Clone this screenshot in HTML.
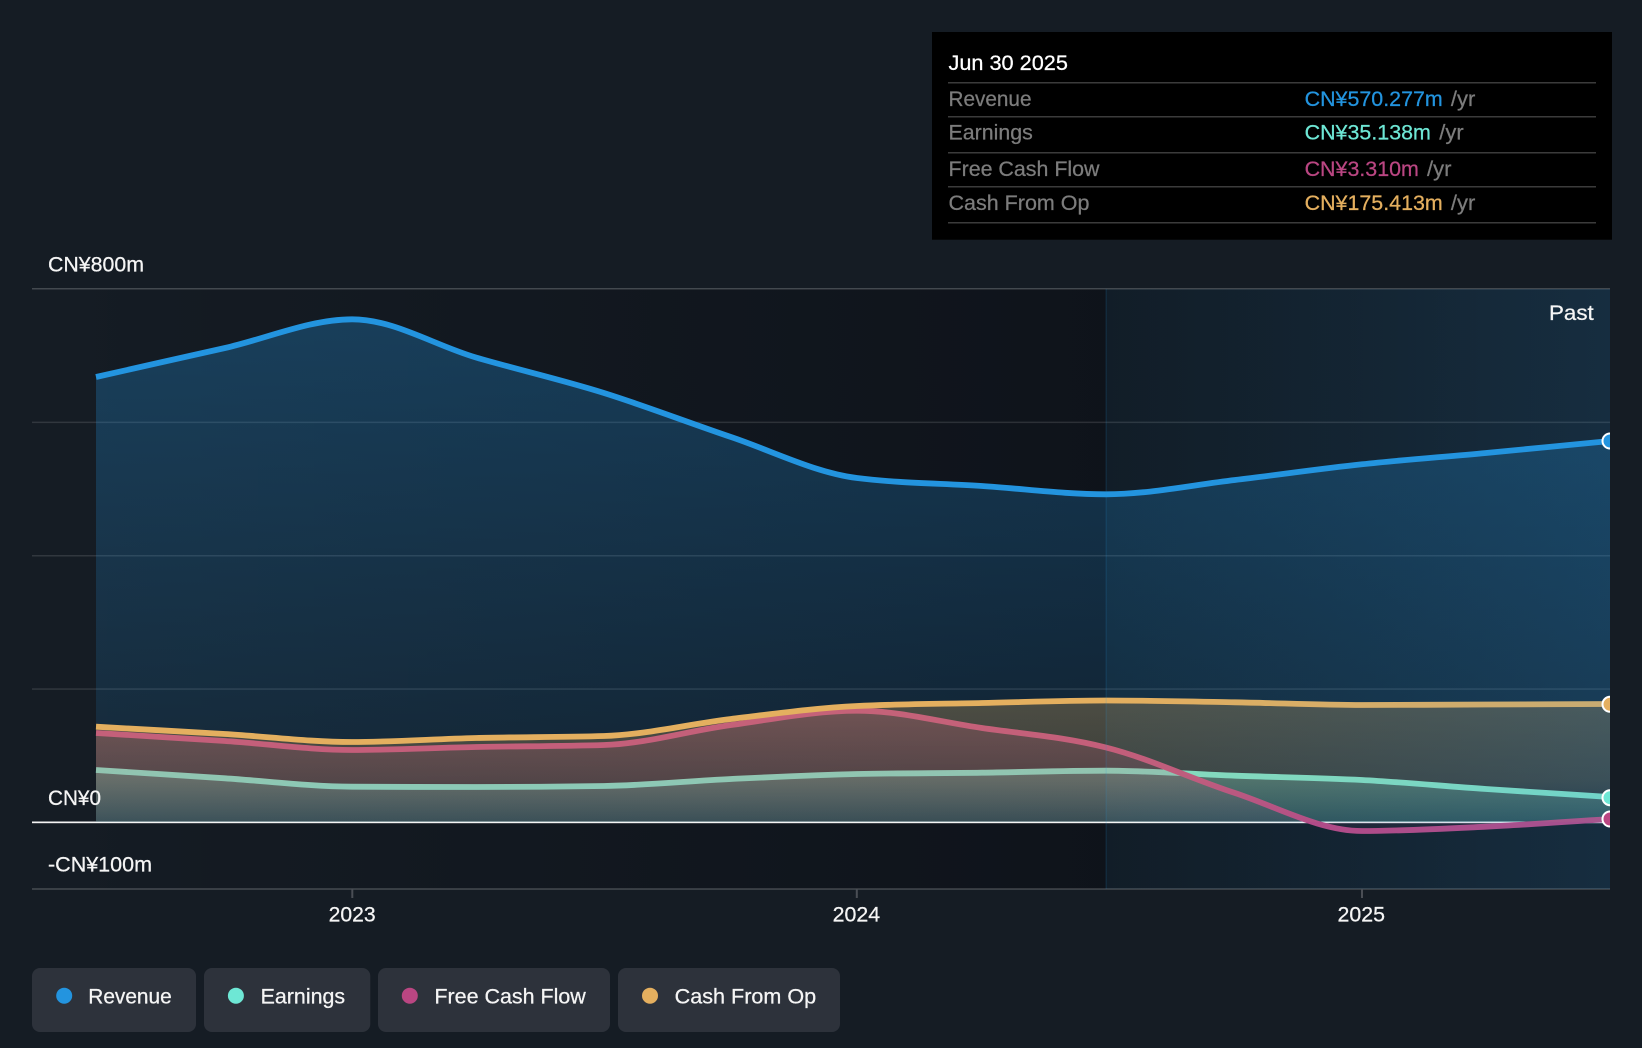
<!DOCTYPE html>
<html>
<head>
<meta charset="utf-8">
<style>
html,body{margin:0;padding:0;background:#151c24;}
svg{display:block;}
text{font-family:"Liberation Sans","Noto Sans CJK SC",sans-serif;font-size:21px;fill:currentColor;stroke:currentColor;stroke-width:.25px;}
</style>
</head>
<body>
<svg width="1642" height="1048" viewBox="0 0 1642 1048" xmlns="http://www.w3.org/2000/svg">
<defs>
<linearGradient id="dark" gradientUnits="userSpaceOnUse" x1="32" y1="0" x2="1106" y2="0">
<stop offset="0" stop-color="#020208" stop-opacity="0"/><stop offset="1" stop-color="#020208" stop-opacity=".34"/>
</linearGradient>
<linearGradient id="pastbg" gradientUnits="userSpaceOnUse" x1="1106" y1="0" x2="1610" y2="0">
<stop offset="0" stop-color="#082030" stop-opacity=".3"/><stop offset="1" stop-color="#081420" stop-opacity=".1"/>
</linearGradient>
<linearGradient id="past" gradientUnits="userSpaceOnUse" x1="1106" y1="0" x2="1610" y2="0">
<stop offset="0" stop-color="#2394df" stop-opacity="0"/><stop offset="1" stop-color="#2394df" stop-opacity=".15"/>
</linearGradient>
<linearGradient id="gb" gradientUnits="userSpaceOnUse" x1="0" y1="319" x2="0" y2="822">
<stop offset="0" stop-color="#2394df" stop-opacity=".3"/><stop offset="1" stop-color="#2394df" stop-opacity=".1"/>
</linearGradient>
<linearGradient id="gt" gradientUnits="userSpaceOnUse" x1="0" y1="770" x2="0" y2="822">
<stop offset="0" stop-color="#6ee7d5" stop-opacity=".32"/><stop offset="1" stop-color="#6ee7d5" stop-opacity=".2"/>
</linearGradient>
<linearGradient id="gp" gradientUnits="userSpaceOnUse" x1="0" y1="710" x2="0" y2="822">
<stop offset="0" stop-color="#ba4682" stop-opacity=".3"/><stop offset="1" stop-color="#ba4682" stop-opacity=".08"/>
</linearGradient>
<linearGradient id="go" gradientUnits="userSpaceOnUse" x1="0" y1="700" x2="0" y2="822">
<stop offset="0" stop-color="#e4af5f" stop-opacity=".28"/><stop offset=".65" stop-color="#e4af5f" stop-opacity=".2"/><stop offset="1" stop-color="#e4af5f" stop-opacity=".05"/>
</linearGradient>
<clipPath id="c"><rect x="32" y="280" width="1578" height="620"/></clipPath>
</defs>

<rect width="1642" height="1048" fill="#151c24"/>

<!-- background panel -->
<rect x="32" y="289" width="1074" height="600" fill="url(#dark)"/>
<rect x="1106" y="289" width="504" height="600" fill="url(#pastbg)"/>

<!-- grid -->
<rect x="32" y="288" width="1578" height="1.5" fill="#fff" fill-opacity=".2"/>
<rect x="32" y="421.6" width="1578" height="1.5" fill="#fff" fill-opacity=".12"/>
<rect x="32" y="555" width="1578" height="1.5" fill="#fff" fill-opacity=".12"/>
<rect x="32" y="688.3" width="1578" height="1.5" fill="#fff" fill-opacity=".12"/>
<rect x="32" y="888.2" width="1578" height="1.6" fill="#fff" fill-opacity=".2"/>
<rect x="351.3" y="889" width="2" height="9" fill="#4a4e55"/>
<rect x="855.8" y="889" width="2" height="9" fill="#4a4e55"/>
<rect x="1361" y="889" width="2" height="9" fill="#4a4e55"/>
<rect x="32" y="821.5" width="1578" height="1.7" fill="#f4f4f4"/>

<g clip-path="url(#c)">
<!-- revenue -->
<path fill="url(#gb)" d="M96 377 C138 367.3,183 357.6,225 348 C267 338.4,310 319.3,352 319.3 C394 319.3,434 345.2,476 357.5 C518 369.8,562 379.8,604 393 C646 406.2,689 422.8,731 437 C773 451.2,815 472.7,857 478 C899 483.3,940 483.3,982 486 C1024 488.7,1064 494.3,1106 494.3 C1149 494.3,1192 485,1235 480 C1277 475,1320 468.8,1362 464.3 C1403 459.8,1445 456.9,1486 453 C1527 449.1,1569 445,1610 441 L1610 822 L96 822 Z"/>
<path fill="none" stroke="#2394df" stroke-width="5.8" d="M96 377 C138 367.3,183 357.6,225 348 C267 338.4,310 319.3,352 319.3 C394 319.3,434 345.2,476 357.5 C518 369.8,562 379.8,604 393 C646 406.2,689 422.8,731 437 C773 451.2,815 472.7,857 478 C899 483.3,940 483.3,982 486 C1024 488.7,1064 494.3,1106 494.3 C1149 494.3,1192 485,1235 480 C1277 475,1320 468.8,1362 464.3 C1403 459.8,1445 456.9,1486 453 C1527 449.1,1569 445,1610 441"/>
<!-- earnings -->
<path fill="url(#gt)" d="M96 770 C138 772.8,183 775.5,225 778.3 C267 781.1,310 786.5,352 786.7 C394 786.9,434 787,476 787 C518 787,562 786.7,604 786 C646 785.3,689 781,731 779 C773 777,815 774.9,857 774 C899 773.1,940 773.3,982 772.7 C1024 772.1,1064 770.7,1106 770.7 C1149 770.7,1192 774.2,1235 775.7 C1277 777.2,1320 777.8,1362 780 C1403 782.2,1445 786.2,1486 789 C1527 791.8,1569 794.3,1610 797 L1610 822 L96 822 Z"/>
<path fill="none" stroke="#6ee7d5" stroke-width="5.8" d="M96 770 C138 772.8,183 775.5,225 778.3 C267 781.1,310 786.5,352 786.7 C394 786.9,434 787,476 787 C518 787,562 786.7,604 786 C646 785.3,689 781,731 779 C773 777,815 774.9,857 774 C899 773.1,940 773.3,982 772.7 C1024 772.1,1064 770.7,1106 770.7 C1149 770.7,1192 774.2,1235 775.7 C1277 777.2,1320 777.8,1362 780 C1403 782.2,1445 786.2,1486 789 C1527 791.8,1569 794.3,1610 797"/>
<!-- fcf -->
<path fill="url(#gp)" d="M96 733 C138 735.7,183 738.2,225 741 C267 743.8,310 750,352 750 C394 750,434 747.8,476 747 C518 746.2,562 746.3,604 745 C646 743.7,689 730.7,731 725 C773 719.3,815 710.7,857 710.7 C899 710.7,940 721.9,982 728 C1024 734.1,1064 736.7,1106 747.5 C1149 758.3,1192 779.1,1235 793 C1277 806.9,1320 831,1362 831 C1403 831,1445 828.7,1486 826.7 C1527 824.7,1569 821.6,1610 819 L1610 822 L96 822 Z"/>
<path fill="none" stroke="#ba4682" stroke-width="5.8" d="M96 733 C138 735.7,183 738.2,225 741 C267 743.8,310 750,352 750 C394 750,434 747.8,476 747 C518 746.2,562 746.3,604 745 C646 743.7,689 730.7,731 725 C773 719.3,815 710.7,857 710.7 C899 710.7,940 721.9,982 728 C1024 734.1,1064 736.7,1106 747.5 C1149 758.3,1192 779.1,1235 793 C1277 806.9,1320 831,1362 831 C1403 831,1445 828.7,1486 826.7 C1527 824.7,1569 821.6,1610 819"/>
<!-- cash from op -->
<path fill="url(#go)" d="M96 726.7 C138 729.1,183 731.5,225 734 C267 736.5,310 742,352 742 C394 742,434 739,476 738 C518 737,562 737.3,604 736 C646 734.7,689 724,731 719 C773 714,815 708,857 706 C899 704,940 703.9,982 703 C1024 702.1,1064 700.5,1106 700.5 C1149 700.5,1192 701.5,1235 702.3 C1277 703,1320 705,1362 705 C1403 705,1445 704.7,1486 704.5 C1527 704.3,1569 704.2,1610 704 L1610 822 L96 822 Z"/>
<path fill="none" stroke="#e4af5f" stroke-width="5.8" d="M96 726.7 C138 729.1,183 731.5,225 734 C267 736.5,310 742,352 742 C394 742,434 739,476 738 C518 737,562 737.3,604 736 C646 734.7,689 724,731 719 C773 714,815 708,857 706 C899 704,940 703.9,982 703 C1024 702.1,1064 700.5,1106 700.5 C1149 700.5,1192 701.5,1235 702.3 C1277 703,1320 705,1362 705 C1403 705,1445 704.7,1486 704.5 C1527 704.3,1569 704.2,1610 704"/>

<!-- past overlay -->
<rect x="1106" y="289" width="504" height="600" fill="url(#past)"/>
<rect x="1105.5" y="289" width="1.3" height="600" fill="#2394df" fill-opacity=".15"/>

<!-- end dots -->
<circle cx="1610" cy="441" r="7.5" fill="#2394df" stroke="#fff" stroke-width="2"/>
<circle cx="1610" cy="704.3" r="7.5" fill="#e4af5f" stroke="#fff" stroke-width="2"/>
<circle cx="1610" cy="797.7" r="7.5" fill="#6ee7d5" stroke="#fff" stroke-width="2"/>
<circle cx="1610" cy="819" r="7.5" fill="#ba4682" stroke="#fff" stroke-width="2"/>
</g>

<!-- axis labels -->
<text x="48" y="271.7" color="#f5f5f5" textLength="96" lengthAdjust="spacingAndGlyphs">CN¥800m</text>
<text x="48" y="805" color="#f5f5f5" textLength="53" lengthAdjust="spacingAndGlyphs">CN¥0</text>
<text x="48" y="871.7" color="#f5f5f5" textLength="104" lengthAdjust="spacingAndGlyphs">-CN¥100m</text>
<text x="328.7" y="921.7" color="#f5f5f5" textLength="47" lengthAdjust="spacingAndGlyphs">2023</text>
<text x="832.6" y="921.7" color="#f5f5f5" textLength="47.5" lengthAdjust="spacingAndGlyphs">2024</text>
<text x="1337.5" y="921.7" color="#f5f5f5" textLength="47.5" lengthAdjust="spacingAndGlyphs">2025</text>
<text x="1549" y="320" color="#f5f5f5" textLength="44.7" lengthAdjust="spacingAndGlyphs">Past</text>

<!-- tooltip -->
<rect x="932" y="32" width="680" height="207.7" fill="#000"/>
<text x="948.5" y="70" color="#fff" textLength="119.4" lengthAdjust="spacingAndGlyphs">Jun 30 2025</text>
<rect x="948" y="82" width="648" height="1.5" fill="#3b3b3b"/>
<text x="948.5" y="106" color="#7c7c7c" textLength="83" lengthAdjust="spacingAndGlyphs">Revenue</text>
<text x="1304.6" y="106" color="#2394df" textLength="138.2" lengthAdjust="spacingAndGlyphs">CN¥570.277m</text>
<text x="1450.9" y="106" color="#7c7c7c" textLength="24.4" lengthAdjust="spacingAndGlyphs">/yr</text>
<rect x="948" y="116" width="648" height="1.5" fill="#3b3b3b"/>
<text x="948.5" y="139.3" color="#7c7c7c" textLength="84.3" lengthAdjust="spacingAndGlyphs">Earnings</text>
<text x="1304.6" y="139.3" color="#6ee7d5" textLength="126.3" lengthAdjust="spacingAndGlyphs">CN¥35.138m</text>
<text x="1439.3" y="139.3" color="#7c7c7c" textLength="24.4" lengthAdjust="spacingAndGlyphs">/yr</text>
<rect x="948" y="152" width="648" height="1.5" fill="#3b3b3b"/>
<text x="948.5" y="176" color="#7c7c7c" textLength="151" lengthAdjust="spacingAndGlyphs">Free Cash Flow</text>
<text x="1304.6" y="176" color="#ba4682" textLength="114.3" lengthAdjust="spacingAndGlyphs">CN¥3.310m</text>
<text x="1427" y="176" color="#7c7c7c" textLength="24.4" lengthAdjust="spacingAndGlyphs">/yr</text>
<rect x="948" y="186" width="648" height="1.5" fill="#3b3b3b"/>
<text x="948.5" y="210" color="#7c7c7c" textLength="141" lengthAdjust="spacingAndGlyphs">Cash From Op</text>
<text x="1304.6" y="210" color="#e4af5f" textLength="138.2" lengthAdjust="spacingAndGlyphs">CN¥175.413m</text>
<text x="1450.9" y="210" color="#7c7c7c" textLength="24.4" lengthAdjust="spacingAndGlyphs">/yr</text>
<rect x="948" y="222" width="648" height="1.5" fill="#3b3b3b"/>

<!-- legend -->
<rect x="32" y="968" width="164" height="64" rx="8" fill="#2d323b"/>
<circle cx="64.2" cy="995.7" r="8" fill="#2394df"/>
<text x="88.3" y="1003.3" color="#f5f5f5" textLength="83.4" lengthAdjust="spacingAndGlyphs">Revenue</text>
<rect x="204" y="968" width="166.3" height="64" rx="8" fill="#2d323b"/>
<circle cx="235.9" cy="995.7" r="8" fill="#6ee7d5"/>
<text x="260.6" y="1003.3" color="#f5f5f5" textLength="84.5" lengthAdjust="spacingAndGlyphs">Earnings</text>
<rect x="378" y="968" width="232" height="64" rx="8" fill="#2d323b"/>
<circle cx="409.8" cy="995.7" r="8" fill="#ba4682"/>
<text x="434.4" y="1003.3" color="#f5f5f5" textLength="151.4" lengthAdjust="spacingAndGlyphs">Free Cash Flow</text>
<rect x="618" y="968" width="222" height="64" rx="8" fill="#2d323b"/>
<circle cx="650" cy="995.7" r="8" fill="#e4af5f"/>
<text x="674.7" y="1003.3" color="#f5f5f5" textLength="141.5" lengthAdjust="spacingAndGlyphs">Cash From Op</text>
</svg>
</body>
</html>
